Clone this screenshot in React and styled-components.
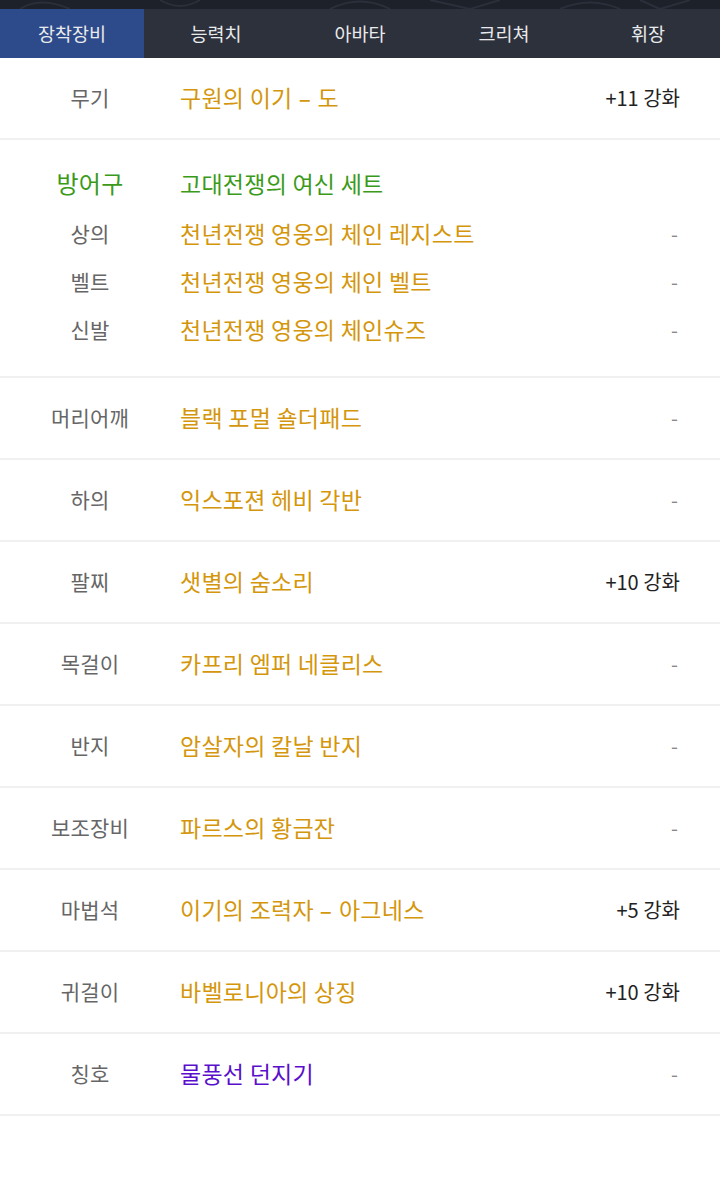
import styled, { createGlobalStyle } from 'styled-components';

const GlobalStyle = createGlobalStyle`
  html, body {
    margin: 0;
    padding: 0;
    background: #fff;
  }
  body {
    font-family: "Noto Sans CJK KR", "Noto Sans", sans-serif;
  }
`;

const Page = styled.div`
  width: 720px;
`;

const Banner = styled.div`
  height: 9px;
  background: #1d212a;
  overflow: hidden;
  line-height: 0;
`;

const Tabs = styled.div`
  display: grid;
  grid-template-columns: repeat(5, 1fr);
  height: 49px;
  background: #2c313c;
`;

const Tab = styled.div`
  display: flex;
  align-items: center;
  justify-content: center;
  font-size: 18.5px;
  color: #e9eaec;
  background: ${(p) => (p.$active ? '#2d4a8a' : 'transparent')};
  padding-bottom: 2px;
`;

const Row = styled.div`
  display: grid;
  grid-template-columns: 180px 1fr auto;
  align-items: center;
  height: ${(p) => p.$h || 48}px;
  padding-right: 40px;
`;

const Section = styled.div`
  border-bottom: 2px solid #f0f0f0;
  padding: ${(p) => (p.$group ? '25px 0 22px' : '16px 0')};
  display: flex;
  flex-direction: column;
`;

const Label = styled.div`
  text-align: center;
  font-size: ${(p) => (p.$head ? 24 : 21)}px;
  letter-spacing: 0.2px;
  color: ${(p) => (p.$head ? '#3b9a1a' : '#666')};
  padding-bottom: 2px;
`;

const Name = styled.div`
  font-size: 23px;
  letter-spacing: 0.25px;
  color: ${(p) => p.$color || '#d4960c'};
  white-space: nowrap;
  padding-bottom: 2px;
`;

const Sep = styled.span`
  display: inline-block;
  margin: 0 3px;
  transform: scaleX(1.7);
`;

const Value = styled.div`
  font-size: 20px;
  color: ${(p) => (p.$empty ? '#888' : '#222')};
  text-align: right;
  padding-bottom: 2px;
  padding-right: ${(p) => (p.$empty ? 2 : 0)}px;
`;

const SubRows = styled.div`
  display: flex;
  flex-direction: column;
  margin-top: 13px;
`;

const items = [
  { label: '무기', name: '구원의 이기 - 도', value: '+11 강화' },
  { group: true },
  { label: '머리어깨', name: '블랙 포멀 숄더패드' },
  { label: '하의', name: '익스포젼 헤비 각반' },
  { label: '팔찌', name: '샛별의 숨소리', value: '+10 강화' },
  { label: '목걸이', name: '카프리 엠퍼 네클리스' },
  { label: '반지', name: '암살자의 칼날 반지' },
  { label: '보조장비', name: '파르스의 황금잔' },
  { label: '마법석', name: '이기의 조력자 - 아그네스', value: '+5 강화' },
  { label: '귀걸이', name: '바벨로니아의 상징', value: '+10 강화' },
  { label: '칭호', name: '물풍선 던지기', value: null, color: '#5a0fcc' },
];

const armor = [
  { label: '상의', name: '천년전쟁 영웅의 체인 레지스트' },
  { label: '벨트', name: '천년전쟁 영웅의 체인 벨트' },
  { label: '신발', name: '천년전쟁 영웅의 체인슈즈' },
];

const tabs = ['장착장비', '능력치', '아바타', '크리쳐', '휘장'];

// "이름 - 부제" 형태는 가운데 하이픈을 넓게
const renderName = (name) => {
  const parts = name.split(' - ');
  if (parts.length < 2) return name;
  return (
    <>
      {parts[0]} <Sep>-</Sep> {parts[1]}
    </>
  );
};

const BannerArt = () => (
  <svg width="720" height="9" viewBox="0 0 720 9">
    <g fill="none" stroke="#2a2f3a" strokeWidth="2">
      <path d="M20 9 Q40 -4 70 9" />
      <path d="M160 0 Q180 12 200 0" />
      <path d="M330 9 Q360 -6 390 9" />
      <path d="M430 0 L470 9 L500 0" />
      <path d="M560 9 Q590 -4 620 9" />
      <path d="M640 0 L660 9 L690 0" />
    </g>
  </svg>
);

const App = () => {
  return (
    <Page>
      <GlobalStyle />
      <Banner>
        <BannerArt />
      </Banner>
      <Tabs>
        {tabs.map((t, i) => (
          <Tab key={t} $active={i === 0}>
            {t}
          </Tab>
        ))}
      </Tabs>
      {items.map((it, i) =>
        it.group ? (
          <Section key={i} $group>
            <Row $h={32}>
              <Label $head>방어구</Label>
              <Name $color="#3b9a1a">고대전쟁의 여신 세트</Name>
              <Value />
            </Row>
            <SubRows>
              {armor.map((a) => (
                <Row key={a.label}>
                  <Label>{a.label}</Label>
                  <Name>{a.name}</Name>
                  <Value $empty>-</Value>
                </Row>
              ))}
            </SubRows>
          </Section>
        ) : (
          <Section key={i}>
            <Row>
              <Label>{it.label}</Label>
              <Name $color={it.color}>{renderName(it.name)}</Name>
              <Value $empty={!it.value}>{it.value || '-'}</Value>
            </Row>
          </Section>
        )
      )}
    </Page>
  );
};

export default App;
